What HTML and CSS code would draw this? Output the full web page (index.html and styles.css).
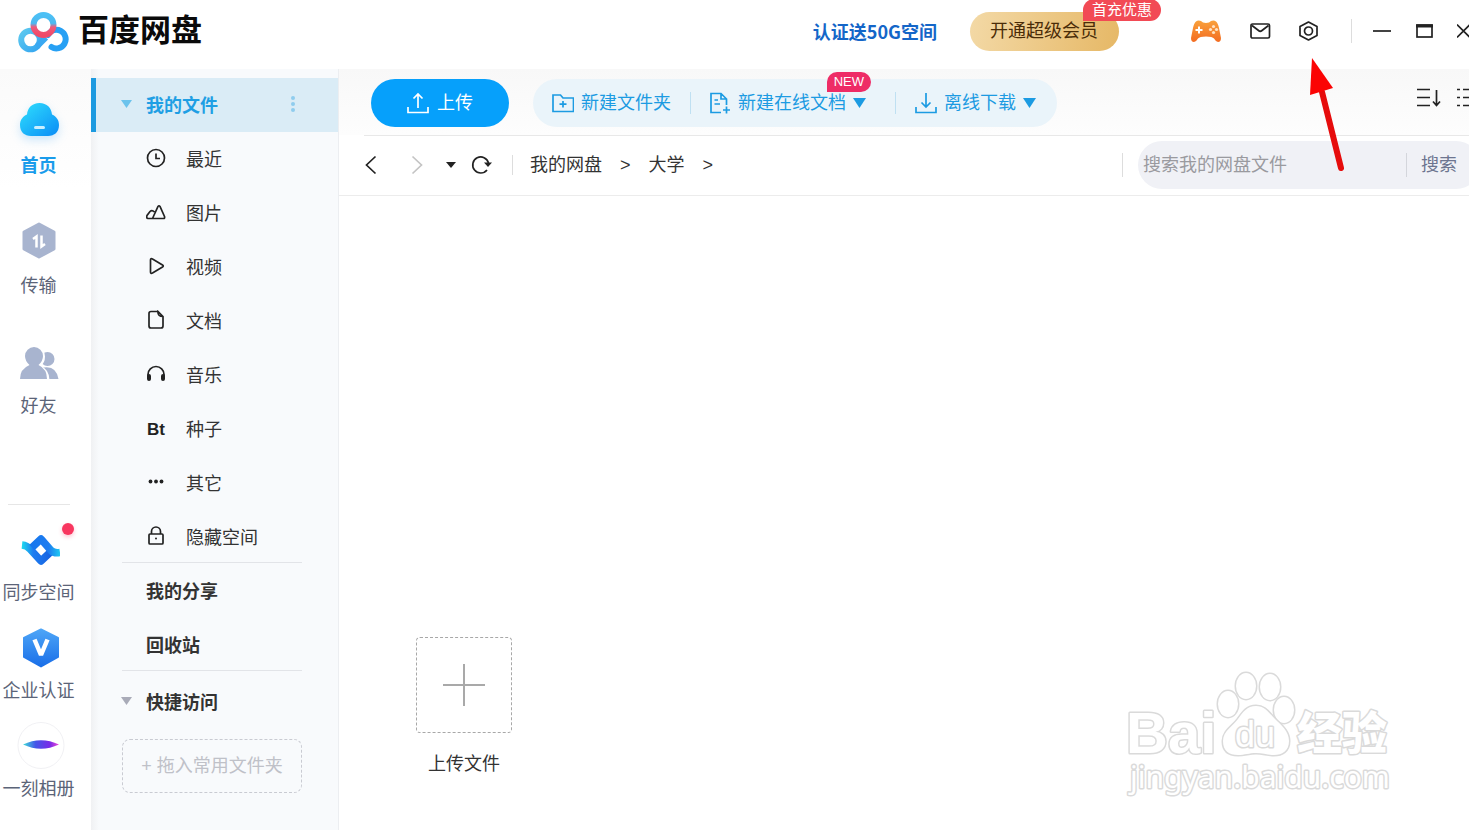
FILE: index.html
```html
<!DOCTYPE html>
<html lang="zh-CN">
<head>
    <meta charset="UTF-8">
    <meta name="viewport" content="width=device-width, initial-scale=1.0">
    <title>百度网盘</title>
    <link rel="stylesheet" href="styles.css">
</head>
<body>

    <header class="header">
        <svg class="logo" viewBox="0 0 52 43" width="52" height="43" fill="none" stroke-width="6">
            <defs>
                <linearGradient id="logo-left" x1="0" y1="0" x2="1" y2="1">
                    <stop offset="0" stop-color="#5cc8ef"/>
                    <stop offset="1" stop-color="#35a6f0"/>
                </linearGradient>
                <linearGradient id="logo-top" x1="0" y1="0" x2="0" y2="1">
                    <stop offset="0" stop-color="#4cc0f5"/>
                    <stop offset="0.42" stop-color="#4cb8f0"/>
                    <stop offset="0.6" stop-color="#ee5a7c"/>
                    <stop offset="1" stop-color="#f04a68"/>
                </linearGradient>
            </defs>
            <circle cx="13.500" cy="30" r="9.300" stroke="url(#logo-left)"/>
            <path d="M20 36.500 L29 27.500" stroke="#39a8f2"/>
            <path d="M31 25 A9.300 9.300 0 1 1 34.500 37" stroke="#27a0f4" stroke-linecap="round"/>
            <circle cx="26.500" cy="15" r="10" stroke="url(#logo-top)"/>
        </svg>
        <h1 class="brand">百度网盘</h1>

        <a class="promo-link" href="#">认证送50G空间</a>
        <button class="vip" type="button">开通超级会员<span class="vip-badge">首充优惠</span></button>

        <div class="header-icons">
            <button type="button" aria-label="游戏">
                <svg viewBox="0 0 32 24" width="32" height="24">
                    <defs>
                        <linearGradient id="pad" x1="0" y1="0" x2="0" y2="1">
                            <stop offset="0" stop-color="#f9a13c"/>
                            <stop offset="1" stop-color="#f36c21"/>
                        </linearGradient>
                    </defs>
                    <path d="M6 2.500 Q8 1 11 2 Q12.500 4 16 4 Q19.500 4 21 2 Q24 1 26 2.500 Q28 4 29 9 L31 19 Q31 23 28 23 Q26 23 24 19.500 Q22.500 17.500 16 17.500 Q9.500 17.500 8 19.500 Q6 23 4 23 Q1 23 1 19 L3 9 Q4 4 6 2.500Z" fill="url(#pad)"/>
                    <path d="M9 7.500v7M5.500 11h7" stroke="#fff" stroke-width="2"/>
                    <g fill="#ffe3c2"><circle cx="23.500" cy="7.500" r="1.600"/><circle cx="23.500" cy="13.500" r="1.600"/><circle cx="20.500" cy="10.500" r="1.600"/><circle cx="26.500" cy="10.500" r="1.600"/></g>
                </svg>
            </button>
            <button type="button" aria-label="消息">
                <svg class="line" viewBox="0 0 22 18" width="22" height="18"><rect x="2" y="2" width="18.500" height="14" rx="1.500"/><path d="M3 3.500 L9.500 8.500 Q11.200 10 13 8.500 L19.500 3.500"/></svg>
            </button>
            <button type="button" aria-label="设置">
                <svg class="line" viewBox="0 0 20 20" width="20" height="20"><path d="M10.500 1 L19 5.500 V14.500 L10.500 19 L2 14.500 V5.500Z" stroke-linejoin="round"/><circle cx="10.500" cy="10" r="4"/></svg>
            </button>
        </div>
        <div class="window-buttons">
            <button type="button" aria-label="最小化"><svg class="line" viewBox="0 0 18 18" width="18" height="18"><path d="M0 9h18"/></svg></button>
            <button type="button" aria-label="最大化"><svg class="line" viewBox="0 0 18 18" width="18" height="18"><rect x="2" y="3" width="15" height="12"/><path d="M1 4h17" stroke-width="3"/></svg></button>
            <button type="button" aria-label="关闭"><svg class="line" viewBox="0 0 16 18" width="16" height="18"><path d="M0 2.500 L13 15.500 M13 2.500 L0 15.500"/></svg></button>
        </div>
    </header>

    <div class="layout">
        <nav class="rail">
            <a class="rail-item active" href="#">
                <svg viewBox="0 0 44 40" width="44" height="40">
                    <defs>
                        <linearGradient id="cloud" x1="0" y1="0" x2="1" y2="1">
                            <stop offset="0" stop-color="#2fe0fd"/>
                            <stop offset="1" stop-color="#0b8cf6"/>
                        </linearGradient>
                    </defs>
                    <path d="M22.500 2 C30 2 34.500 7 35 13.500 C39.500 15.500 42 19 42 24 C42 31 37.500 35 31 35 H14 C7.500 35 3 31 3 24 C3 19 5.500 15.500 10 13.500 C10.500 7 15 2 22.500 2Z" fill="url(#cloud)"/>
                    <path d="M18.500 26.500h8" stroke="#c9efff" stroke-width="3" stroke-linecap="round"/>
                </svg>
                首页
            </a>
            <a class="rail-item" href="#">
                <svg viewBox="0 0 40 40" width="40" height="40">
                    <path d="M20 3 L35 11 V28 L20 36 L5 28 V11Z" fill="#a8b4cf" stroke="#a8b4cf" stroke-width="3" stroke-linejoin="round"/>
                    <path d="M14 18 L17.500 15.500 V26.500 M22.500 14.500 V25.500 L26 23" fill="none" stroke="#fff" stroke-width="2.500"/>
                </svg>
                传输
            </a>
            <a class="rail-item" href="#">
                <svg viewBox="0 0 40 40" width="40" height="40">
                    <g fill="#a8b4cf"><circle cx="28.500" cy="18" r="7"/><path d="M22 38 V27 Q37 23 39.500 38Z"/></g>
                    <path d="M6 39 Q5.500 27 12 25 Q7 22 7 15.500 A9 9.500 0 0 1 25 15.500 Q25 22 20.500 25 Q29 28 29.500 39Z" fill="#fff" transform="translate(1 0)"/>
                    <path d="M1 38 Q1 28 10.500 24 Q6 20 6 15 A9 9 0 0 1 24 15 Q24 20 19.500 24 Q28 28 28 38Z" fill="#a8b4cf"/>
                </svg>
                好友
            </a>

            <div class="rail-bottom">
                <a class="rail-item small" href="#">
                    <svg viewBox="0 0 42 40" width="42" height="40" fill="none" stroke-width="7.500">
                        <defs>
                            <linearGradient id="sync-a"><stop offset="0" stop-color="#1777ee"/><stop offset="0.600" stop-color="#1d7cf0"/><stop offset="1" stop-color="#1dc9f2"/></linearGradient>
                            <linearGradient id="sync-b"><stop offset="0" stop-color="#1dd9ee"/><stop offset="0.400" stop-color="#1d7cf0"/><stop offset="1" stop-color="#1763e2"/></linearGradient>
                        </defs>
                        <path d="M4 15 Q9 15.500 12 19 L23 31 L32 22.500" stroke="url(#sync-b)" stroke-linejoin="round"/>
                        <path d="M14 17.500 L23 9 L33 20.500 Q36 23.500 42 22.500" stroke="url(#sync-a)" stroke-linejoin="round"/>
                    </svg>
                    同步空间
                    <span class="dot"></span>
                </a>
                <a class="rail-item small" href="#">
                    <svg viewBox="0 0 40 40" width="40" height="40">
                        <defs>
                            <linearGradient id="cert" x1="0" y1="0" x2="0" y2="1"><stop offset="0" stop-color="#4da5f7"/><stop offset="1" stop-color="#1a6fe8"/></linearGradient>
                        </defs>
                        <path d="M22 1.500 L39 10 V29 L22 38.500 L5 29 V10Z" fill="url(#cert)" stroke="url(#cert)" stroke-width="2" stroke-linejoin="round"/>
                        <path d="M15.500 11.500 L22 27 L28.500 11.500" fill="none" stroke="#fff" stroke-width="4.500" stroke-linejoin="bevel"/>
                    </svg>
                    企业认证
                </a>
                <a class="rail-item small" href="#">
                    <svg class="album" viewBox="0 0 52 48" width="52" height="48">
                        <defs>
                            <linearGradient id="album"><stop offset="0" stop-color="#3fe0d8"/><stop offset="0.350" stop-color="#4456e8"/><stop offset="0.750" stop-color="#7a2ae8"/><stop offset="1" stop-color="#f04ad8"/></linearGradient>
                        </defs>
                        <circle cx="28" cy="23.500" r="23" fill="#fff" stroke="#f1f1f4"/>
                        <path d="M10 22.500 Q28 14 46 22.500 Q28 31 10 22.500Z" fill="url(#album)"/>
                    </svg>
                    一刻相册
                </a>
            </div>
        </nav>

        <aside class="sidebar">
            <a class="side-item selected" href="#">
                <span class="triangle"></span>我的文件
                <svg class="more" viewBox="0 0 4 18" width="4" height="18" fill="#8fcdee"><circle cx="2" cy="3" r="2"/><circle cx="2" cy="9" r="2"/><circle cx="2" cy="15" r="2"/></svg>
            </a>
            <a class="side-item sub" href="#"><svg class="line" viewBox="0 0 20 20" width="20" height="20"><circle cx="10" cy="10" r="8.500"/><path d="M10 5.500V10.500H14"/></svg>最近</a>
            <a class="side-item sub" href="#"><svg class="line" viewBox="0 0 20 20" width="20" height="20"><path d="M6.500 16.500 L12 4.500 Q13 3 14 4.500 L18.500 14.500 Q19 16.500 17.500 16.500 H2 Q0 16 1 13.500 L4 9.500 Q6 7.500 8.500 10"/></svg>图片</a>
            <a class="side-item sub" href="#"><svg class="line" viewBox="0 0 20 20" width="20" height="20"><path d="M4.500 4 Q4.500 2 6.500 3 L16.500 9 Q18 10 16.500 11 L6.500 17 Q4.500 18 4.500 16Z"/></svg>视频</a>
            <a class="side-item sub" href="#"><svg class="line" viewBox="0 0 20 20" width="20" height="20"><path d="M12 1.500 H5 Q3 1.500 3 3.500 V16 Q3 18 5 18 H15 Q17 18 17 16 V6.500 L12 1.500 Q11.500 6.500 17 6.500"/></svg>文档</a>
            <a class="side-item sub" href="#"><svg class="line" viewBox="0 0 20 20" width="20" height="20"><path d="M2 14 V10.500 A8 8 0 0 1 18 10.500 V14"/><path d="M3 12V15M17 12V15" stroke-width="4" stroke-linecap="round"/></svg>音乐</a>
            <a class="side-item sub" href="#"><b class="bt">Bt</b>种子</a>
            <a class="side-item sub" href="#"><svg viewBox="0 0 20 20" width="20" height="20" fill="#222"><circle cx="4.500" cy="9.500" r="1.900"/><circle cx="10" cy="9.500" r="1.900"/><circle cx="15.500" cy="9.500" r="1.900"/></svg>其它</a>
            <a class="side-item sub" href="#"><svg class="line" viewBox="0 0 20 20" width="20" height="20"><rect x="3" y="8" width="14" height="10" rx="1"/><path d="M5.500 8 V5.500 A4.500 4.500 0 0 1 14.500 5.500 V8"/><circle cx="10" cy="12.500" r="1" fill="#222" stroke="none"/></svg>隐藏空间</a>
            <hr>
            <a class="side-item strong" href="#">我的分享</a>
            <a class="side-item strong" href="#">回收站</a>
            <hr>
            <a class="side-item strong quick" href="#"><span class="triangle"></span>快捷访问</a>
            <div class="drop-box">+ 拖入常用文件夹</div>
        </aside>

        <main class="main">
            <div class="toolbar">
                <button class="upload" type="button">
                    <svg viewBox="0 0 22 22" width="22" height="22"><path d="M1 15V20.500H21V15M11 16V2M6.500 6.500L11 2L15.500 6.500"/></svg>上传
                </button>
                <div class="actions">
                    <button type="button">
                        <svg viewBox="0 0 22 22" width="22" height="22"><path d="M1 3H8.500L11 6H21.500V19.500H1ZM11 9V15.500M7.500 12.200H14.500"/></svg>新建文件夹
                    </button>
                    <button class="online-doc" type="button">
                        <svg viewBox="0 0 22 22" width="22" height="22"><path d="M12 20.500H2V1.500H12L17.500 7V13M12 1.500V7H17.500M5.500 8H9M5.500 12H11M17.500 14.500V21.500M14 18H21"/></svg>新建在线文档<span class="caret"></span>
                        <span class="new-badge">NEW</span>
                    </button>
                    <button class="offline" type="button">
                        <svg viewBox="0 0 22 22" width="22" height="22"><path d="M1 15V20.500H21V15M11 1V15M6.500 10.500L11 15L15.500 10.500"/></svg>离线下载<span class="caret"></span>
                    </button>
                </div>
                <div class="view-buttons">
                    <button type="button" aria-label="排序"><svg class="line" viewBox="0 0 26 20" width="26" height="20"><path d="M1 1.500H14M1 9.500H14M1 17.500H14M20.500 2V17M17 13.500L20.500 17.500L24 13.500"/></svg></button>
                    <button type="button" aria-label="列表"><svg class="line" viewBox="0 0 20 20" width="20" height="20"><path d="M0 1.500H3M6 1.500H20M0 9.500H3M6 9.500H20M0 17.500H3M6 17.500H20"/></svg></button>
                </div>
            </div>

            <div class="path-bar">
                <div class="history">
                    <button type="button" aria-label="后退"><svg class="line" viewBox="0 0 14 20" width="14" height="20"><path d="M11.500 1.500L2.500 10L11.500 18.500"/></svg></button>
                    <button class="disabled" type="button" aria-label="前进" disabled><svg class="line" viewBox="0 0 14 20" width="14" height="20"><path d="M2.500 1.500L11.500 10L2.500 18.500"/></svg></button>
                    <button class="recent" type="button" aria-label="历史"><svg viewBox="0 0 10 20" width="10" height="20"><path d="M0 7H10L5 13Z" fill="#222"/></svg></button>
                    <button type="button" aria-label="刷新"><svg class="line" viewBox="0 0 22 20" width="22" height="20"><path d="M17 15 A8 8 0 1 1 18.500 8"/><path d="M14 7.500H22L18 12Z" fill="#222" stroke="none"/></svg></button>
                </div>
                <nav class="crumbs">
                    <a href="#">我的网盘</a><span>&gt;</span><a href="#">大学</a><span>&gt;</span>
                </nav>
                <form class="search">
                    <input type="text" placeholder="搜索我的网盘文件" aria-label="搜索我的网盘文件">
                    <button type="button">搜索</button>
                </form>
            </div>

            <div class="files">
                <button class="add-file" type="button">
                    <span class="add-box"><svg viewBox="0 0 42 42" width="42" height="42"><path d="M21 0V42M0 21H42" stroke="#a9a9a9" stroke-width="2"/></svg></span>
                    上传文件
                </button>
            </div>

            <svg class="watermark" viewBox="0 0 270 130" width="270" height="130">
                <g class="mark">
                    <ellipse cx="102" cy="35" rx="10" ry="13"/>
                    <ellipse cx="120" cy="17" rx="10" ry="13"/>
                    <ellipse cx="144" cy="18" rx="10" ry="13"/>
                    <ellipse cx="158" cy="41" rx="10" ry="13"/>
                    <path d="M130 37 C139 37 143 44 149 50 C155 56 163 62 163 72 C163 82 156 86 148 86 C141 86 137 84 130 84 C123 84 119 86 112 86 C103 86 97 82 97 72 C97 62 107 57 112 50 C117 43 121 37 130 37Z"/>
                    <text class="mark-name" x="0" y="84">Bai</text>
                    <text class="mark-du" x="109" y="78">du</text>
                    <text class="mark-cn" x="171" y="81">经验</text>
                    <text class="mark-url" x="4" y="119">jingyan.baidu.com</text>
                </g>
            </svg>
        </main>
    </div>

    <svg class="pointer" viewBox="0 0 40 116" width="40" height="116">
        <path d="M14 34 L33 110" stroke="#e60c0c" stroke-width="6" stroke-linecap="round"/>
        <path d="M4 0 L25 30 L2 37Z" fill="#fb0404"/>
    </svg>

</body>
</html>
```
FILE: styles.css
```css
* {
    box-sizing: border-box;
}
body {
    display: flex;
    flex-direction: column;
    position: relative;
    min-height: 100vh;
    margin: 0;
    overflow: hidden;
    background-color: #fff;
    color: #333;
    font-family: "Liberation Sans", "Noto Sans CJK SC", sans-serif;
    font-size: 18px;
    line-height: 24px;
}
a {
    color: inherit;
    text-decoration: none;
}
button {
    padding: 0;
    border: none;
    background: none;
    color: inherit;
    font: inherit;
    white-space: nowrap;
}
svg {
    display: block;
    flex: none;
}
.line {
    fill: none;
    stroke: #222;
    stroke-width: 1.7;
}

/* Header */
.header {
    display: flex;
    align-items: center;
    height: 69px;
    padding: 0 0 7px 17px;
    margin-right: -4px;
}
.brand {
    margin: 0 auto 0 9px;
    color: #0a0a0a;
    font-size: 31px;
    line-height: 40px;
}
.promo-link {
    color: #1466c8;
    font-family: "Noto Sans CJK SC", sans-serif;
    font-weight: bold;
    white-space: nowrap;
}
.vip {
    position: relative;
    height: 39px;
    margin-left: 33px;
    padding: 0 21px 0 20px;
    border-radius: 20px;
    background: linear-gradient(100deg, #f3d9a6, #e6b866);
    color: #4a2c08;
}
.vip-badge {
    position: absolute;
    top: -13px;
    right: -42px;
    padding: 0 9px;
    border-radius: 11px 11px 11px 0;
    background-color: #f24a55;
    color: #fff;
    font-size: 15px;
    line-height: 22px;
}
.header-icons {
    display: flex;
    align-items: center;
    gap: 27px;
    margin-left: 71px;
    padding-right: 33px;
}
.window-buttons {
    display: flex;
    align-items: center;
    gap: 24px;
    height: 24px;
    padding-left: 21px;
    border-left: 1px solid #ddd;
}

.layout {
    display: flex;
    flex: 1;
}

/* Left rail */
.rail {
    display: flex;
    flex-direction: column;
    flex: none;
    gap: 43px;
    width: 91px;
    padding: 32px 14px 29px 0;
    background: linear-gradient(#fafafa, #fff 120px);
    color: #5b6478;
}
.rail-item {
    display: flex;
    flex-direction: column;
    align-items: center;
    justify-content: space-between;
    position: relative;
    height: 77px;
    white-space: nowrap;
}
.rail-item.small {
    height: 75px;
}
.rail-item.active {
    color: #1a9ceb;
    font-weight: bold;
}
.rail-item.active svg {
    filter: drop-shadow(0 4px 5px rgba(10, 140, 240, 0.2));
}
.rail-item .album {
    margin: -4px 0;
}
.rail-bottom {
    display: flex;
    flex-direction: column;
    gap: 23px;
    margin-top: auto;
    padding-top: 26px;
    background: linear-gradient(#e6e6e6, #e6e6e6) 8px 0 / 62px 1px no-repeat;
}
.dot {
    position: absolute;
    top: -7px;
    right: 3px;
    width: 12px;
    height: 12px;
    border-radius: 50%;
    background-color: #f8365f;
    box-shadow: 0 2px 4px rgba(248, 54, 95, 0.3);
}

/* Sidebar */
.sidebar {
    flex: none;
    width: 248px;
    padding: 9px 0 37px 0;
    border-right: 1px solid #eceef1;
    background: linear-gradient(90deg, #f0f1f3, #f8fafc 8px);
}
.side-item {
    display: flex;
    align-items: center;
    height: 54px;
    padding: 2px 0 0 30px;
}
.side-item svg {
    margin-top: -4px;
}
.side-item.selected {
    padding: 2px 43px 0 25px;
    border-left: 5px solid #1c9ae0;
    background-color: #daecf6;
    color: #1f9fe4;
    font-weight: bold;
}
.side-item.sub {
    gap: 20px;
    padding-left: 55px;
}
.side-item.strong {
    padding-left: 55px;
    font-weight: bold;
}
.side-item.quick {
    padding-left: 30px;
}
.triangle {
    width: 11px;
    height: 8px;
    margin: -4px 14px 0 0;
    background-color: #a9abb8;
    clip-path: polygon(0 0, 100% 0, 50% 100%);
}
.selected .triangle {
    background-color: #6cc3ec;
}
.side-item .more {
    margin-left: auto;
}
.bt {
    width: 20px;
    color: #222;
    font-size: 17px;
    text-align: center;
}
.sidebar hr {
    width: 180px;
    height: 1px;
    margin: -2px 0 1px 31px;
    border: none;
    background-color: #e2e4e8;
}
.sidebar hr + .quick {
    margin-top: 4px;
}
.drop-box {
    width: 180px;
    margin: 10px 0 0 31px;
    border: 1px dashed #c9cbd2;
    border-radius: 8px;
    color: #bfc1c8;
    line-height: 52px;
    text-align: center;
}

/* Main area */
.main {
    display: flex;
    flex: 1;
    flex-direction: column;
    position: relative;
    min-width: 0;
}
.toolbar {
    display: flex;
    align-items: flex-start;
    height: 66px;
    margin-right: -8px;
    padding: 10px 0 0 32px;
    background: linear-gradient(#f8f8f8, #fdfdfd);
}
.upload {
    display: flex;
    align-items: center;
    justify-content: center;
    gap: 8px;
    width: 138px;
    height: 48px;
    border-radius: 24px;
    background-color: #06a0fb;
    color: #fff;
}
.upload svg,
.actions svg {
    fill: none;
    stroke: currentColor;
    stroke-width: 1.7;
}
.actions {
    display: flex;
    align-items: center;
    height: 48px;
    margin-left: 24px;
    border-radius: 24px;
    background-color: #eaf4fa;
    color: #1c9be2;
}
.actions button {
    display: flex;
    align-items: center;
    gap: 7px;
    position: relative;
    padding: 0 19px;
}
.actions button + button {
    border-left: 1px solid #bfe0f2;
    line-height: 20px;
}
.actions .online-doc {
    padding: 0 29px 0 18px;
}
.actions .offline {
    padding-right: 21px;
}
.caret {
    width: 13px;
    height: 10px;
    background-color: #1c9be2;
    clip-path: polygon(0 0, 100% 0, 50% 100%);
}
.new-badge {
    position: absolute;
    top: -20px;
    right: 24px;
    padding: 0 7px;
    border-radius: 10px 10px 10px 0;
    background-color: #ee2c66;
    color: #fff;
    font-size: 13px;
    line-height: 20px;
}
.view-buttons {
    display: flex;
    align-items: center;
    gap: 15px;
    height: 38px;
    margin-left: auto;
}
.path-bar {
    display: flex;
    align-items: center;
    height: 61px;
    margin-right: -11px;
    padding-left: 25px;
    border-bottom: 1px solid #ececec;
    background: linear-gradient(#e8e8e8, #e8e8e8) 25px 0 / 100% 1px no-repeat;
}
.history {
    display: flex;
    align-items: center;
    padding-right: 20px;
    border-right: 1px solid #ddd;
    gap: 32px;
}
.history .disabled .line {
    stroke: #c4c4c4;
}
.history .recent {
    margin: 0 -18px 0 -10px;
}
.crumbs {
    display: flex;
    gap: 18px;
    margin-left: 17px;
}
.search {
    display: flex;
    align-items: center;
    height: 48px;
    margin-left: auto;
    border-radius: 24px;
    background-color: #f0f1f6;
    color: #6d7590;
}
.search::before {
    content: "";
    height: 24px;
    margin-left: -16px;
    margin-right: 15px;
    border-left: 1px solid #ddd;
}
.search input {
    width: 268px;
    padding: 0 5px;
    border: none;
    outline: none;
    background: none;
    color: #333;
    font: inherit;
}
.search input::placeholder {
    color: #9a9a9f;
}
.search button {
    padding: 0 23px 0 14px;
    border-left: 1px solid #d4d6dc;
}
.files {
    display: flex;
    flex: 1;
    align-items: flex-end;
    padding: 24px 77px 54px;
}
.add-file {
    display: flex;
    flex-direction: column;
    align-items: center;
    gap: 19px;
}
.add-box {
    display: flex;
    align-items: center;
    justify-content: center;
    width: 96px;
    height: 96px;
    border: 1px dashed #a8a8a8;
    border-radius: 4px;
}

/* Overlays */
.watermark {
    position: absolute;
    right: 73px;
    bottom: 31px;
    pointer-events: none;
}
.mark {
    fill: #fff;
    stroke: #dadada;
    stroke-width: 3;
    stroke-linejoin: round;
    paint-order: stroke;
}
.mark-name {
    font-size: 58px;
    font-weight: bold;
}
.mark-du {
    font-size: 36px;
}
.mark-cn {
    font-size: 45px;
    font-weight: 900;
}
.mark-url {
    font-family: "Noto Sans", sans-serif;
    font-size: 30px;
}
.pointer {
    position: absolute;
    top: 58px;
    right: 121px;
    pointer-events: none;
}
```
